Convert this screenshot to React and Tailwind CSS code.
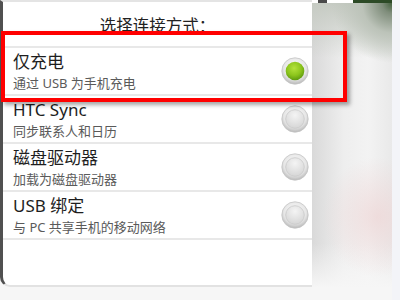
import React from "react";

function Radio({ checked }) {
  return (
    <svg width="28" height="28" viewBox="0 0 28 28">
      <defs>
        <radialGradient id="ring" cx="50%" cy="40%" r="60%">
          <stop offset="0%" stopColor="#ffffff" />
          <stop offset="70%" stopColor="#e6e6e6" />
          <stop offset="100%" stopColor="#b8b8b8" />
        </radialGradient>
        <radialGradient id="inner" cx="50%" cy="30%" r="70%">
          <stop offset="0%" stopColor="#f4f4f4" />
          <stop offset="100%" stopColor="#d6d6d6" />
        </radialGradient>
        <radialGradient id="green" cx="45%" cy="35%" r="65%">
          <stop offset="0%" stopColor="#b4e23c" />
          <stop offset="60%" stopColor="#8cc51c" />
          <stop offset="100%" stopColor="#5f9a10" />
        </radialGradient>
      </defs>
      <circle cx="14" cy="14" r="13.2" fill="url(#ring)" stroke="#c4c4c4" strokeWidth="0.8" />
      {checked ? (
        <circle cx="14" cy="14" r="9.3" fill="url(#green)" />
      ) : (
        <circle cx="14" cy="14" r="9.3" fill="url(#inner)" stroke="#c9c9c9" strokeWidth="0.8" />
      )}
    </svg>
  );
}

const rows = [
  { t: "仅充电", s: "通过 USB 为手机充电", on: true },
  { t: "HTC Sync", s: "同步联系人和日历" },
  { t: "磁盘驱动器", s: "加载为磁盘驱动器" },
  { t: "USB 绑定", s: "与 PC 共享手机的移动网络" },
];

export default function App() {
  return (
    <div
      className="relative w-[400px] h-[300px] bg-white overflow-hidden flex"
      style={{ fontFamily: '"Noto Sans", "Noto Sans CJK SC", sans-serif' }}
    >
      <div className="w-[312px] h-[300px] flex flex-col bg-[#f6f6f6]">
        <div className="h-[287px] flex flex-col bg-white border-l-[3px] border-[#505050] rounded-bl-[10px] border-t-2 border-t-[#e4e4e4] border-b-2 border-b-[#e2e2e2]">
          <div className="h-[46px] flex items-center justify-center border-b-2 border-[#e8e8e8] text-[16.5px] text-[#222] pt-[4px]">
            选择连接方式：
          </div>
          {rows.map((r, i) => (
            <div
              key={i}
              className="h-[48px] flex items-center justify-between pl-[10px] pr-[3px] border-b-2 border-[#e8e8e8]"
            >
              <div className="flex flex-col leading-none pt-[1px]">
                <span className="text-[17px] text-[#1e1e1e] leading-[20px]">{r.t}</span>
                <span className="text-[13px] text-[#5a5a5a] leading-[16px] mt-[3px]">{r.s}</span>
              </div>
              <Radio checked={r.on} />
            </div>
          ))}
          <div className="flex-1" />
        </div>
      </div>
      <div className="w-[80px] h-[300px] flex flex-col">
        <div className="h-[3px] flex">
          <div className="w-[6px] bg-white" />
          <div className="w-[9px] bg-[#4a4a4a]" />
          <div className="w-[26px] bg-white" />
          <div className="flex-1 bg-[#2c4a26]" />
        </div>
        <div className="flex-1 bg-[radial-gradient(circle_at_100%_0%,#43603d_0px,#7f8d7b_10px,#bcc3b9_30px,rgba(228,230,226,0)_60px),radial-gradient(55px_60px_at_82%_72%,rgba(238,212,212,0.7),rgba(240,218,218,0)),linear-gradient(to_bottom,#c6cbc3_0px,rgba(220,222,218,0)_55px,rgba(255,255,255,0)_240px,#f6f6f6_285px),linear-gradient(to_right,#d9d9d9,#eeeeee_40%,#f3f3f3_70%,#e9e9e9)]" />
      </div>
      <div className="w-[8px] h-[300px] bg-[#f3f4f8]" />
      <div className="absolute left-[1px] top-[31px] w-[346px] h-[71px] border-[4px] border-[#ff0000] shadow-[3px_3px_4px_rgba(0,0,0,0.35)]" />
    </div>
  );
}
